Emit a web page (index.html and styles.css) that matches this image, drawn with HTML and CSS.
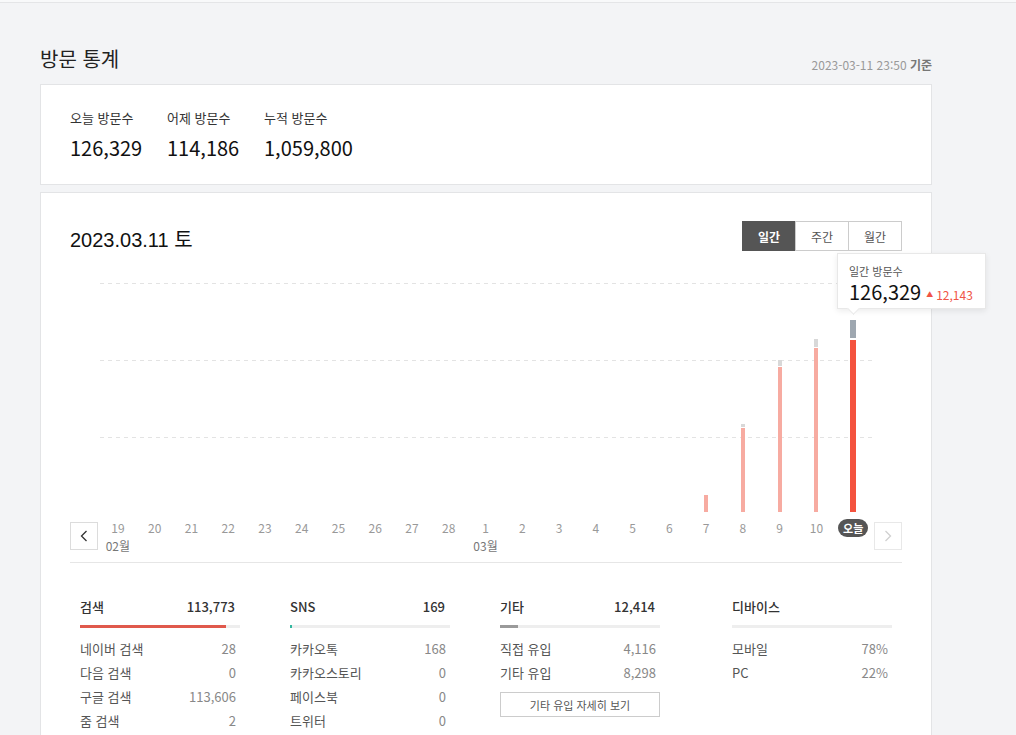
FILE: index.html
```html
<!DOCTYPE html>
<html lang="ko">
<head>
<meta charset="utf-8">
<title>방문 통계</title>
<link rel="stylesheet" href="styles.css">
</head>
<body>
<div class="topline"></div>
<main class="page">
  <div class="page-head">
    <h1 class="page-title">방문 통계</h1>
    <div class="stamp">2023-03-11 23:50 <b>기준</b></div>
  </div>

  <section class="card summary">
    <div class="stat"><div class="stat-label">오늘 방문수</div><div class="stat-value">126,329</div></div>
    <div class="stat"><div class="stat-label">어제 방문수</div><div class="stat-value">114,186</div></div>
    <div class="stat"><div class="stat-label">누적 방문수</div><div class="stat-value">1,059,800</div></div>
  </section>

  <section class="card detail">
    <div class="detail-head">
      <h2 class="date">2023.03.11 토</h2>
      <div class="toggle">
        <button class="tg on">일간</button><button class="tg">주간</button><button class="tg">월간</button>
      </div>
    </div>

    <div class="chart">
      <div class="plot">
        <div class="gridlines"><div></div><div></div><div></div></div>
        <div class="bars">
          <div class="col"></div><div class="col"></div><div class="col"></div><div class="col"></div>
          <div class="col"></div><div class="col"></div><div class="col"></div><div class="col"></div>
          <div class="col"></div><div class="col"></div><div class="col"></div><div class="col"></div>
          <div class="col"></div><div class="col"></div><div class="col"></div><div class="col"></div>
          <div class="col"><div class="bar" style="height:17px"></div></div>
          <div class="col"><div class="cap" style="height:3px"></div><div class="bar" style="height:84px"></div></div>
          <div class="col"><div class="cap" style="height:6px"></div><div class="bar" style="height:145px"></div></div>
          <div class="col"><div class="cap" style="height:8px"></div><div class="bar" style="height:164px"></div></div>
          <div class="col today"><div class="cap" style="height:18px"></div><div class="bar" style="height:172px"></div></div>
        </div>
      </div>

      <div class="tooltip">
        <div class="tt-label">일간 방문수</div>
        <div class="tt-row"><span class="tt-value">126,329</span><span class="tt-delta"><span class="tri">▲</span>12,143</span></div>
      </div>

      <div class="axis">
        <button class="nav prev" aria-label="이전">
          <svg width="8" height="12" viewBox="0 0 8 12"><polyline points="6.5,1 1.5,6 6.5,11" fill="none" stroke="#333" stroke-width="1.3"/></svg>
        </button>
        <div class="days">
          <div class="day"><span class="num">19</span><span class="month">02월</span></div>
          <div class="day"><span class="num">20</span></div>
          <div class="day"><span class="num">21</span></div>
          <div class="day"><span class="num">22</span></div>
          <div class="day"><span class="num">23</span></div>
          <div class="day"><span class="num">24</span></div>
          <div class="day"><span class="num">25</span></div>
          <div class="day"><span class="num">26</span></div>
          <div class="day"><span class="num">27</span></div>
          <div class="day"><span class="num">28</span></div>
          <div class="day"><span class="num">1</span><span class="month">03월</span></div>
          <div class="day"><span class="num">2</span></div>
          <div class="day"><span class="num">3</span></div>
          <div class="day"><span class="num">4</span></div>
          <div class="day"><span class="num">5</span></div>
          <div class="day"><span class="num">6</span></div>
          <div class="day"><span class="num">7</span></div>
          <div class="day"><span class="num">8</span></div>
          <div class="day"><span class="num">9</span></div>
          <div class="day"><span class="num">10</span></div>
          <div class="day"><span class="pill">오늘</span></div>
        </div>
        <button class="nav next" aria-label="다음">
          <svg width="8" height="12" viewBox="0 0 8 12"><polyline points="1.5,1 6.5,6 1.5,11" fill="none" stroke="#d0d0d0" stroke-width="1.3"/></svg>
        </button>
      </div>
    </div>

    <div class="sources">
      <div class="src">
        <div class="src-head"><span>검색</span><span>113,773</span></div>
        <div class="track"><div class="fill red" style="width:91%"></div></div>
        <div class="row"><span>네이버 검색</span><span class="v">28</span></div>
        <div class="row"><span>다음 검색</span><span class="v">0</span></div>
        <div class="row"><span>구글 검색</span><span class="v">113,606</span></div>
        <div class="row"><span>줌 검색</span><span class="v">2</span></div>
      </div>
      <div class="src">
        <div class="src-head"><span>SNS</span><span>169</span></div>
        <div class="track"><div class="fill teal" style="width:2px"></div></div>
        <div class="row"><span>카카오톡</span><span class="v">168</span></div>
        <div class="row"><span>카카오스토리</span><span class="v">0</span></div>
        <div class="row"><span>페이스북</span><span class="v">0</span></div>
        <div class="row"><span>트위터</span><span class="v">0</span></div>
      </div>
      <div class="src">
        <div class="src-head"><span>기타</span><span>12,414</span></div>
        <div class="track"><div class="fill gray" style="width:18px"></div></div>
        <div class="row"><span>직접 유입</span><span class="v">4,116</span></div>
        <div class="row"><span>기타 유입</span><span class="v">8,298</span></div>
        <button class="more">기타 유입 자세히 보기</button>
      </div>
      <div class="src device">
        <div class="src-head"><span>디바이스</span></div>
        <div class="track"></div>
        <div class="row"><span>모바일</span><span class="v">78%</span></div>
        <div class="row"><span>PC</span><span class="v">22%</span></div>
      </div>
    </div>
  </section>
</main>
</body>
</html>
```

FILE: styles.css
```css
* { box-sizing: border-box; }

body {
  margin: 0;
  background: #f3f4f6;
  font-family: "Noto Sans CJK KR", "Noto Sans", sans-serif;
  color: #222;
}

.topline {
  height: 3px;
  background: #f8f9fa;
  border-bottom: 1px solid #e4e5e7;
}

.page {
  width: 892px;
  margin-left: 40px;
  padding-top: 42px;
}

.page-head {
  display: flex;
  justify-content: space-between;
  align-items: flex-end;
}

.page-title {
  margin: 0;
  font-size: 20px;
  font-weight: 400;
  line-height: 28px;
  color: #222;
}

.stamp {
  font-size: 12px;
  line-height: 16px;
  color: #999;
}
.stamp b { color: #777; font-weight: 700; }

.card {
  background: #fff;
  border: 1px solid #e3e4e6;
}

.summary {
  margin-top: 11px;
  display: flex;
  padding: 24px 29px 23px;
}
.stat { width: 97px; }
.stat:last-child { width: auto; }
.stat-label { font-size: 13px; line-height: 18px; color: #333; }
.stat-value { margin-top: 8px; font-size: 20px; line-height: 26px; color: #111; }

.detail {
  margin-top: 7px;
  padding: 28px 29px 30px;
}

.detail-head {
  display: flex;
  justify-content: space-between;
  align-items: flex-start;
  height: 30px;
}
.date {
  margin: 8px 0 0;
  font-family: "Liberation Sans", "Noto Sans CJK KR", sans-serif;
  font-size: 20px;
  font-weight: 400;
  line-height: 22px;
  color: #111;
}

.toggle { display: flex; }
.tg {
  width: 54px;
  height: 30px;
  margin-left: -1px;
  border: 1px solid #ccc;
  background: #fff;
  font-family: "Noto Sans CJK KR", sans-serif;
  font-size: 12px;
  color: #555;
  padding: 0;
}
.tg.on {
  margin-left: 0;
  background: #555;
  border-color: #555;
  color: #fff;
  font-weight: 700;
}

.chart {
  position: relative;
  margin-top: 32px;
}

.plot {
  display: grid;
  margin-left: 29.5px;
  width: 772px;
  height: 229px;
}
.gridlines, .bars { grid-area: 1 / 1; }
.gridlines {
  display: grid;
  grid-template-rows: 77px 77px 75px;
}
.gridlines div {
  background: repeating-linear-gradient(to right, #e3e3e3 0 4px, transparent 4px 8px) top left / 100% 1px no-repeat;
}
.bars {
  display: flex;
  align-items: flex-end;
}
.col {
  flex: 1;
  display: flex;
  flex-direction: column;
  align-items: center;
}
.cap { width: 4px; background: #d8d8d8; margin-bottom: 1px; }
.bar { width: 4px; background: #f7aba1; }
.col.today .cap { width: 6px; background: #9ea7b0; margin-bottom: 2px; }
.col.today .bar { width: 6px; background: #f4533e; }

.tooltip {
  position: absolute;
  top: -30px;
  left: 767px;
  width: 149px;
  height: 56px;
  padding: 9px 0 0 11px;
  background: #fff;
  border: 1px solid #e8e8e8;
  box-shadow: 0 2px 6px rgba(0, 0, 0, 0.08);
}
.tooltip::after {
  content: "";
  position: absolute;
  left: 11px;
  bottom: -5px;
  width: 8px;
  height: 8px;
  background: #fff;
  border-right: 1px solid #e8e8e8;
  border-bottom: 1px solid #e8e8e8;
  transform: rotate(45deg);
}
.tt-label { font-size: 11px; line-height: 16px; color: #555; }
.tt-row { display: flex; align-items: baseline; margin-top: 1px; }
.tt-value { font-size: 20px; line-height: 24px; color: #111; }
.tt-delta { margin-left: 5px; font-size: 12px; color: #f05446; }
.tri { font-size: 7px; margin-right: 3px; position: relative; top: -3px; }

.axis {
  display: flex;
  align-items: flex-start;
  margin-top: 7px;
  padding-bottom: 7px;
  border-bottom: 1px solid #e6e6e6;
}
.nav {
  width: 28px;
  height: 28px;
  margin-top: 3px;
  padding: 0;
  border: 1px solid #dcdcdc;
  background: #fff;
  display: flex;
  align-items: center;
  justify-content: center;
}
.nav.next { border-color: #e8e8e8; }
.days {
  display: flex;
  width: 772px;
  margin: 0 2.5px 0 1.5px;
}
.day {
  flex: 1;
  display: flex;
  flex-direction: column;
  align-items: center;
  height: 36px;
}
.num { font-size: 12px; line-height: 18px; color: #999; }
.month { font-size: 12px; line-height: 18px; color: #777; }
.pill {
  background: #555;
  color: #fff;
  border-radius: 9px;
  padding: 0 5px;
  font-size: 11px;
  font-weight: 700;
  line-height: 18px;
}

.sources {
  display: flex;
  gap: 50px;
  padding: 34px 10px 0;
}
.src { width: 160px; }
.src.device { margin-left: 22px; }
.src-head {
  display: flex;
  justify-content: space-between;
  padding-right: 5px;
  font-size: 13px;
  line-height: 20px;
  font-weight: 500;
  color: #333;
}
.track {
  height: 3px;
  margin: 8px 0 9px;
  background: #eee;
}
.fill { height: 100%; }
.fill.red { background: #e0594c; }
.fill.teal { background: #33b8a0; }
.fill.gray { background: #9a9a9a; }
.row {
  display: flex;
  justify-content: space-between;
  padding-right: 4px;
  font-size: 13px;
  line-height: 24px;
  color: #555;
}
.row .v { color: #888; }
.more {
  margin-top: 7px;
  width: 160px;
  height: 25px;
  padding: 0;
  border: 1px solid #ccc;
  background: #fff;
  font-family: "Noto Sans CJK KR", sans-serif;
  font-size: 11px;
  color: #555;
}
```
